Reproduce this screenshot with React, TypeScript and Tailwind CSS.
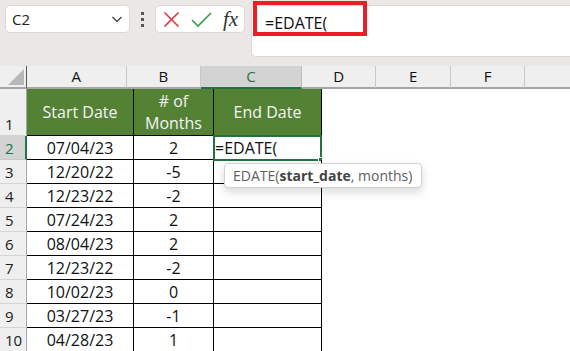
import React from "react";

const rows: [string, string][] = [
  ["07/04/23", "2"],
  ["12/20/22", "-5"],
  ["12/23/22", "-2"],
  ["07/24/23", "2"],
  ["08/04/23", "2"],
  ["12/23/22", "-2"],
  ["10/02/23", "0"],
  ["03/27/23", "-1"],
  ["04/28/23", "1"],
];

const font = { fontFamily: '"Open Sans", "Noto Sans", sans-serif' };

function Toolbar() {
  return (
    <div className="relative flex h-[66px] items-start bg-[#ebe7e6] pt-[5px]">
      <div className="ml-[5px] flex h-[28px] w-[125px] items-center justify-between rounded-[5px] border border-[#dcd8d6] bg-white pl-[6px] pr-[4px]">
        <span className="text-[15px] text-[#222]">C2</span>
        <svg width="14" height="14" viewBox="0 0 14 14" className="mr-[1px]">
          <path d="M2.5 5l4.5 4.5L11.5 5" fill="none" stroke="#333" strokeWidth="1.2" />
        </svg>
      </div>
      <div className="ml-[11px] flex h-[28px] flex-col items-center justify-center gap-[3px]">
        <span className="h-[3px] w-[3px] bg-[#555]" />
        <span className="h-[3px] w-[3px] bg-[#555]" />
        <span className="h-[3px] w-[3px] bg-[#555]" />
      </div>
      <div className="ml-[11px] flex h-[28px] w-[90px] items-center rounded-[5px] border border-[#dcd8d6] bg-white pl-[7px]">
        <svg width="17" height="17" viewBox="0 0 17 17">
          <path d="M1.5 1.5l14 14M15.5 1.5l-14 14" stroke="#e5343b" strokeWidth="1.6" fill="none" />
        </svg>
        <svg width="21" height="17" viewBox="0 0 21 17" className="ml-[11px]">
          <path d="M1 9l6 6L20 2" stroke="#3a9a4b" strokeWidth="1.6" fill="none" />
        </svg>
        <span
          className="ml-[11px] text-[21px] italic leading-none text-[#333]"
          style={{ fontFamily: '"Liberation Serif", "DejaVu Serif", serif' }}
        >
          fx
        </span>
      </div>
      <div className="ml-[6px] flex h-[52px] flex-1 items-start rounded-l-[5px] border border-r-0 border-[#dcd8d6] bg-white pl-[13px] pt-[5px]">
        <span className="text-[16px] text-[#111]">=EDATE(</span>
      </div>
      <div className="absolute left-[253px] top-[1px] h-[35px] w-[114px] border-[4px] border-[#ee1c25]" />
    </div>
  );
}

function ColHeader({ label, w, selected }: { label: string; w: string; selected?: boolean }) {
  return (
    <div
      className={
        selected
          ? `${w} flex h-full items-center justify-center border-r border-b-2 border-r-[#bdbdbd] border-b-[#217346] bg-[#d3d3d3] text-[15px] text-[#217346]`
          : `${w} flex h-full items-center justify-center border-r border-b-2 border-r-[#c8c8c8] border-b-[#a6a6a6] bg-[#efefef] text-[15px] text-[#111]`
      }
    >
      {label}
    </div>
  );
}

function RowNum({ n, h, selected }: { n: number; h: string; selected?: boolean }) {
  return (
    <div
      className={
        selected
          ? `${h} flex w-[27px] shrink-0 items-end border-b border-r-2 border-b-[#c8c8c8] border-r-[#217346] bg-[#d3d3d3] pb-[1px] pl-[5px] text-[15px] leading-[20px] text-[#217346]`
          : `${h} flex w-[27px] shrink-0 items-end border-b border-r border-b-[#d4d4d4] border-r-[#a6a6a6] bg-[#efefef] pb-[1px] pl-[5px] text-[15px] leading-[20px] text-[#222]`
      }
    >
      {n}
    </div>
  );
}

export default function App() {
  return (
    <div className="h-[351px] w-[570px] overflow-hidden bg-white" style={font}>
      <Toolbar />
      <div className="flex h-[23px] w-[600px]">
        <div className="flex h-full w-[27px] shrink-0 items-end justify-end border-r border-b-2 border-r-[#555] border-b-[#a6a6a6] bg-[#efefef] pb-[2px] pr-[2px]">
          <svg width="16" height="16" viewBox="0 0 16 16">
            <path d="M16 0V16H0Z" fill="#b8b8b8" />
          </svg>
        </div>
        <ColHeader label="A" w="w-[107px]" />
        <ColHeader label="B" w="w-[80px]" />
        <ColHeader label="C" w="w-[108px]" selected />
        <ColHeader label="D" w="w-[80px]" />
        <ColHeader label="E" w="w-[80px]" />
        <ColHeader label="F" w="w-[80px]" />
        <ColHeader label="" w="w-[80px]" />
      </div>

      <div className="flex">
        <RowNum n={1} h="h-[47px]" />
        <div className="flex h-[47px] w-[107px] items-center justify-center border-r border-b border-black bg-[#548235] text-[16px] text-[#f4f4f4]">
          Start Date
        </div>
        <div className="flex h-[47px] w-[80px] flex-col items-center justify-center border-r border-b border-black bg-[#548235] text-[16px] leading-[22px] text-[#f4f4f4]">
          <span># of</span>
          <span>Months</span>
        </div>
        <div className="flex h-[47px] w-[108px] items-center justify-center border-r border-b border-black bg-[#548235] text-[16px] text-[#f4f4f4]">
          End Date
        </div>
      </div>

      {rows.map(([date, months], i) => (
        <div key={i} className="flex">
          <RowNum n={i + 2} h="h-[24px]" selected={i === 0} />
          <div className="flex h-[24px] w-[107px] items-end justify-center border-r border-b border-black text-[16px] leading-[22px] text-[#111]">
            {date}
          </div>
          <div className="flex h-[24px] w-[80px] items-end justify-center border-r border-b border-black text-[16px] leading-[22px] text-[#111]">
            {months}
          </div>
          <div className="relative flex h-[24px] w-[108px] items-end border-r border-b border-black text-[16px] leading-[22px] text-[#111]">
            {i === 0 && (
              <>
                <span className="pl-[1px]">=EDATE(</span>
                <div className="absolute -left-[1px] -top-[1px] h-[26px] w-[109px] border-2 border-[#217346]" />
                <div className="absolute -bottom-[3px] -right-[2px] h-[5px] w-[5px] border border-white bg-[#217346]" />
                <div className="absolute left-[10px] top-[27px] z-10 flex h-[25px] w-[198px] items-center whitespace-nowrap rounded-[4px] border border-[#d0d0d0] bg-white pl-[8px] text-[14px] text-[#606060] shadow-[0_4px_10px_rgba(0,0,0,0.15)]">
                  EDATE(<b className="font-bold text-[#444]">start_date</b>, months)
                </div>
              </>
            )}
          </div>
        </div>
      ))}
    </div>
  );
}
